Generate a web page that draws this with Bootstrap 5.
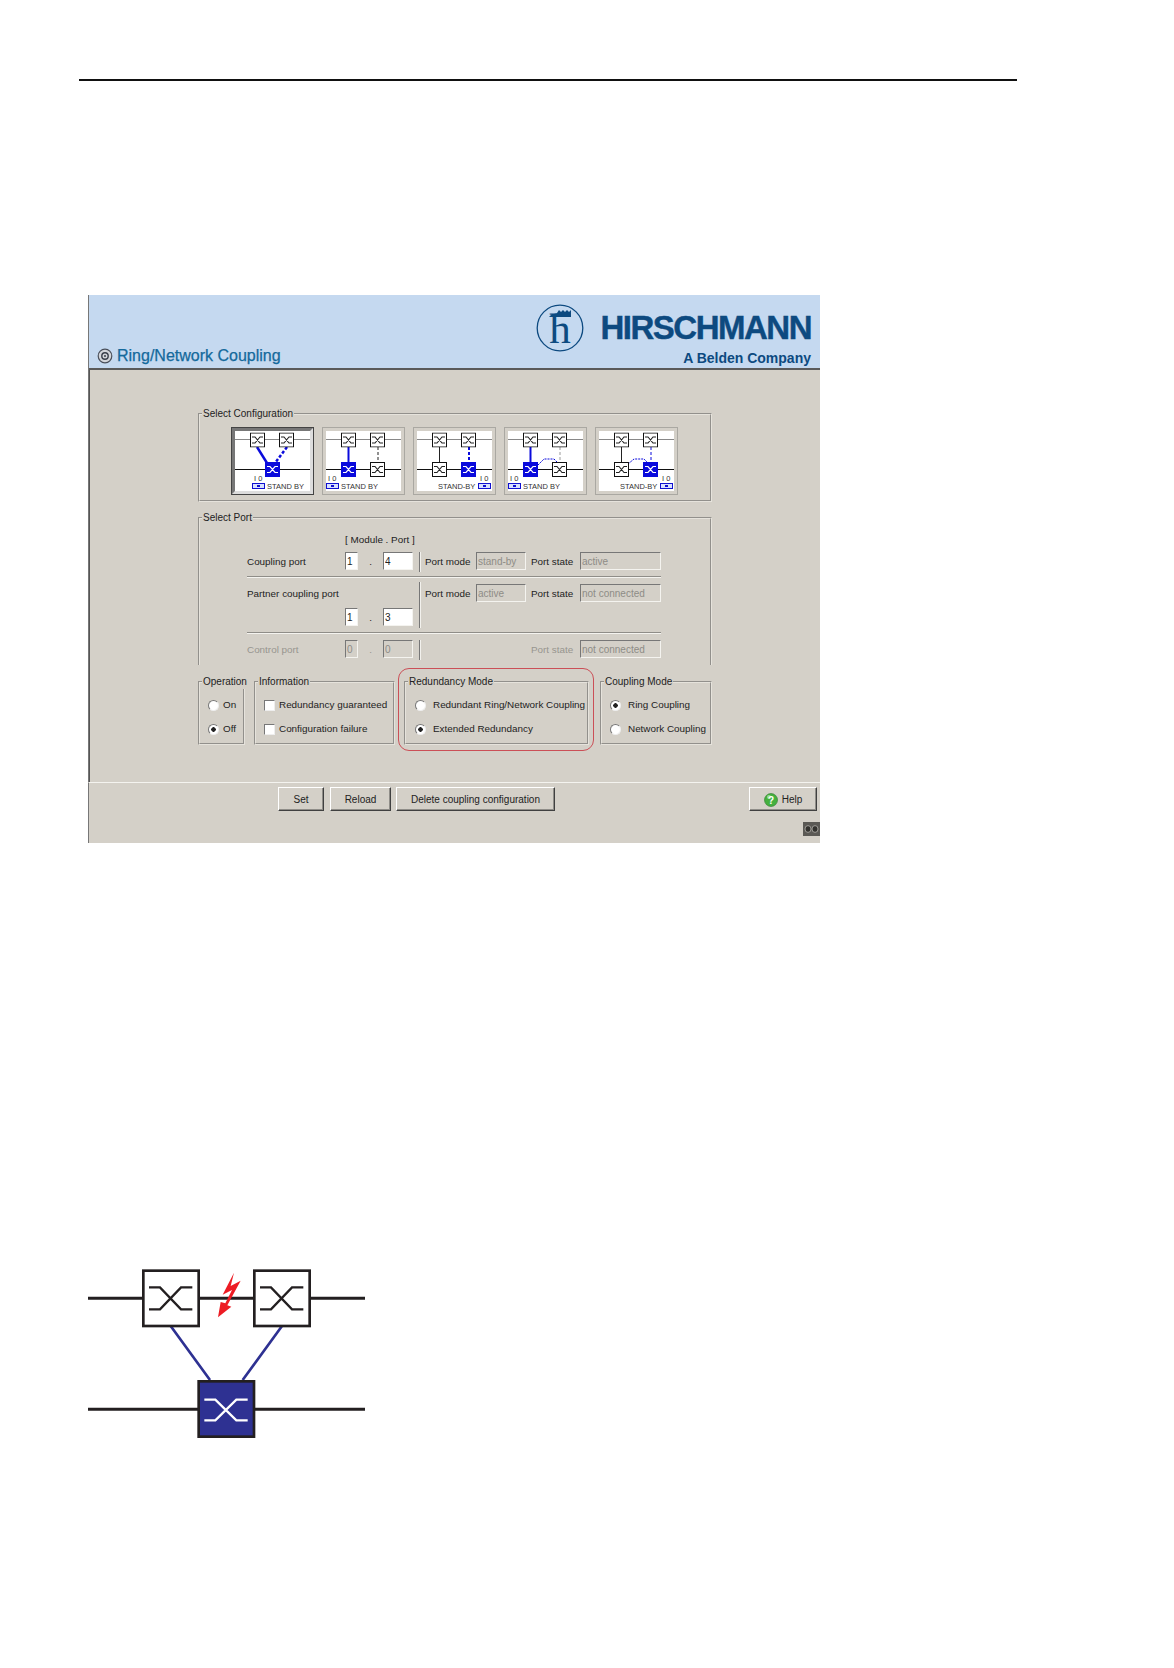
<!DOCTYPE html>
<html lang="en">
<head>
  <meta charset="UTF-8" />
  <title>Ring/Network Coupling</title>
  <link href="https://cdn.jsdelivr.net/npm/bootstrap@5.3.0/dist/css/bootstrap.min.css" rel="stylesheet" />
  <style>
    body { background: #fff; font-family: "Liberation Sans", Arial, sans-serif; }
    .page-wrap { margin-left: 79px; padding-top: 79px; }
    .top-rule { width: 938px; margin: 0 0 214px; border: 0; border-top: 2px solid #111; opacity: 1; }

    .app-panel { margin-left: 9px; width: 732px; height: 548px; background: #d4d0c8; color: #222; font-size: 9.9px; border-left: 1px solid #777; }
    .app-head { height: 75px; background: #c5d9f0; border-bottom: 2px solid #5a5a5a; }
    .app-title { padding: 0 0 2px 8px; font-size: 16px; line-height: 20px; color: #14699c; -webkit-text-stroke: .25px #14699c; }
    .logo-block { padding: 9px 9px 0 0; }
    .logo-name { font-size: 33px; font-weight: 700; letter-spacing: -1.5px; color: #0d4a80; line-height: 46px; margin-left: 17px; -webkit-text-stroke: .4px #0d4a80; }
    .logo-sub { font-size: 14px; font-weight: 700; color: #0d4a80; line-height: 14px; margin-top: -1px; }

    .app-body { height: 412px; padding: 37px 0 0 108px; border-left: 1px solid #555; }
    .app-foot { height: 61px; border-top: 1px solid #f4f3ef; padding: 4px 3px 0 189px; border-left: 1px solid #777; margin-left: -1px; }

    .win-group { border: 2px groove #e6e3dc; margin: 0; padding: 0; min-width: 0; }
    .win-group > legend { float: none; width: auto; font-size: 10px; line-height: 14px; margin: 0 0 0 2px; padding: 0 1px; }
    .cfg-group { width: 514px; height: 95px; }
    .cfg-thumbs { padding: 6px 0 0 31px; gap: 8px; }
    .thumb { width: 83px; height: 68px; padding: 4px; background: #fff; border: 4px solid #d4d0c8; outline: 1px solid #aaa8a2; outline-offset: -1px; box-sizing: border-box; }
    .thumb.picked { border-color: #777 #ddd #ddd #777; outline-color: #444; }
    .thumb svg { display: block; width: 75px; height: 60px; margin: -4px; }
    .thumb text { font-family: "Liberation Sans", Arial, sans-serif; font-size: 7.5px; fill: #333; }

    .port-group { width: 514px; height: 154px; margin-top: 9px; border-bottom: 0; }
    .port-inner { padding: 0 0 0 47px; height: 135px; }
    .cap-line { padding-left: 98px; height: 14px; line-height: 14px; margin-top: 8px; margin-bottom: 5px; }
    .port-left { width: 172px; }
    .port-right { height: 100%; border-left: 1px solid #777; box-shadow: inset 1px 0 0 #f2f1ed; padding-left: 5px; }
    .port-label { width: 98px; }
    .port-text { line-height: 20px; }
    .dot-sep { width: 25px; text-align: center; }
    .port-row { height: 20px; }
    .port-row-tall { height: 46px; }
    .tall-top { padding-top: 2px; }
    .tall-inputs { margin-top: 4px; }
    .port-sep { width: 414px; height: 2px; border-top: 1px solid #8f8d88; border-bottom: 1px solid #f4f3ef; }
    .sep-wide { margin-bottom: 6px !important; }
    .cell-mode { width: 51px; }
    .cell-state { width: 49px; margin-left: 5px; }
    .is-off { color: #97958f; }

    .form-control.win-input { height: 18px; min-height: 0; padding: 0 1px; font-size: 10px; line-height: 16px; border-radius: 0; color: #222; background: #fff; border: 1px solid; border-color: #777 #f4f3ef #f4f3ef #777; box-shadow: none; }
    .form-control.win-input:disabled { background: #d4d0c8; color: #8e8c86; opacity: 1; }
    .w-13 { width: 13px; }
    .w-30 { width: 30px; }
    .w-50 { width: 50px !important; }
    .w-81 { width: 81px; }

    .bottom-row { position: relative; width: 514px; height: 70px; margin-top: 10px; gap: 9px; }
    .win-group.op { width: 47px; }
    .win-group.info { width: 141px; }
    .win-group.redund { width: 185px; }
    .win-group.couple { width: 112px; margin-left: 2px; }
    .opt-line { height: 24px; padding-left: 8px; gap: 4px; white-space: nowrap; }
    .opt-stack { padding-top: 4px; }
    .redund .opt-line { padding-left: 9px; gap: 7px; }
    .couple .opt-line { padding-left: 8px; gap: 7px; }
    .form-check-input.win-radio, .form-check-input.win-check { flex: none; margin: 0; width: 11px; height: 11px; border: 1px solid; border-color: #777 #eee #eee #777; background-color: #fff; background-image: none; box-shadow: none; }
    .form-check-input.win-radio { border-radius: 50%; }
    .form-check-input.win-check { border-radius: 0; }
    .form-check-input.win-radio:checked { background-color: #fff; background-image: radial-gradient(circle, #222 0 2px, #fff 2.5px); }
    .red-frame { position: absolute; left: 200px; top: -7px; width: 196px; height: 83px; border: 1px solid #cb4f57; border-radius: 11px; pointer-events: none; }

    .btn.win-btn { height: 24px; padding: 1px 0 0; font-size: 10px; line-height: 20px; color: #222; background: #d4d0c8; border-radius: 0; border: 1px solid; border-color: #fff #404040 #404040 #fff; box-shadow: inset -1px -1px 0 #8f8d88; }
    .bw-46 { width: 46px; }
    .bw-61 { width: 61px; margin-left: 6px; }
    .bw-159 { width: 159px; margin-left: 5px; }
    .bw-68 { width: 68px; gap: 4px; }
    .corner-mark { margin-top: 11px; margin-right: -3px; display: block; }
    .ring-fig { display: block; margin: 407px 0 0 1px; }
  </style>
</head>
<body>
  <svg class="d-none">
    <symbol id="sw" viewBox="0 0 15 15">
      <rect x=".5" y=".5" width="14" height="14" fill="#fff" stroke="#111" />
      <path d="M2 4.5h3l5 6h3M2 10.5h3l5-6h3" fill="none" stroke="#222" stroke-width="1.1" />
    </symbol>
    <symbol id="sw-on" viewBox="0 0 15 15">
      <rect width="15" height="15" fill="#0a0adc" />
      <path d="M2 4.5h3l5 6h3M2 10.5h3l5-6h3" fill="none" stroke="#fff" stroke-width="1.2" />
    </symbol>
    <symbol id="led" viewBox="0 0 13 6">
      <rect x=".5" y=".5" width="12" height="5" fill="#d8e0ff" stroke="#1010d0" />
      <rect x="5" y="2" width="3" height="2" fill="#1010d0" />
    </symbol>
  </svg>

  <div class="page-wrap">
    <hr class="top-rule" />

    <div class="app-panel">
      <div class="app-head d-flex justify-content-between">
        <div class="app-title align-self-end d-flex align-items-center gap-1">
          <svg width="16" height="16" viewBox="0 0 16 16"><circle cx="8" cy="8" r="6.8" fill="#d3d5da" stroke="#4a4f5a" stroke-width="1.2" /><circle cx="8" cy="8" r="3.2" fill="none" stroke="#3a3f4a" stroke-width="1.4" /><circle cx="8" cy="8" r="1" fill="#3a3f4a" /></svg>
          <span>Ring/Network Coupling</span>
        </div>
        <div class="logo-block text-end">
          <div class="d-flex align-items-center">
            <svg width="48" height="48" viewBox="0 0 48 48">
              <circle cx="24" cy="24" r="22.8" fill="none" stroke="#0d4a80" stroke-width="1.3" />
              <path d="M13 13h22V6l-2 2-2-2-2 2-2-2-2 2-2-2-2 3-6 2z" fill="#0d4a80" />
              <text x="24" y="39" text-anchor="middle" font-family="Liberation Serif" font-size="43" fill="#0d4a80">h</text>
            </svg>
            <div class="logo-name">HIRSCHMANN</div>
          </div>
          <div class="logo-sub">A Belden Company</div>
        </div>
      </div>

      <div class="app-body">
        <fieldset class="win-group cfg-group">
          <legend>Select Configuration</legend>
          <div class="cfg-thumbs d-flex">
            <div class="thumb picked">
              <svg viewBox="0 0 75 60">
                <path d="M0 8.5h75" stroke="#888" /><path d="M0 38.5h75" stroke="#111" />
                <path d="M22 16l10 16" stroke="#0a0adc" stroke-width="2.5" /><path d="M52 16L40 32" stroke="#0a0adc" stroke-width="2.5" stroke-dasharray="3 2" />
                <use href="#sw" x="15" y="1.5" width="15" height="15" /><use href="#sw" x="44" y="1.5" width="15" height="15" /><use href="#sw-on" x="30" y="31" width="15" height="15" />
                <text x="19" y="50">I 0</text><use href="#led" x="17" y="52" width="13" height="6" /><text x="32" y="57.5">STAND BY</text>
              </svg>
            </div>
            <div class="thumb">
              <svg viewBox="0 0 75 60">
                <path d="M0 8.5h75" stroke="#888" /><path d="M0 38.5h75" stroke="#111" />
                <path d="M22.5 16v16" stroke="#0a0adc" stroke-width="2" /><path d="M52 16v16" stroke="#222" stroke-dasharray="3 2" />
                <use href="#sw" x="15" y="1.5" width="15" height="15" /><use href="#sw" x="44" y="1.5" width="15" height="15" /><use href="#sw-on" x="15" y="31" width="15" height="15" /><use href="#sw" x="44" y="31" width="15" height="15" />
                <text x="2" y="50">I 0</text><use href="#led" x="0" y="52" width="13" height="6" /><text x="15" y="57.5">STAND BY</text>
              </svg>
            </div>
            <div class="thumb">
              <svg viewBox="0 0 75 60">
                <path d="M0 8.5h75" stroke="#888" /><path d="M0 38.5h75" stroke="#111" />
                <path d="M22.5 16v16" stroke="#222" /><path d="M52 16v16" stroke="#0a0adc" stroke-width="2" stroke-dasharray="3 2" />
                <use href="#sw" x="15" y="1.5" width="15" height="15" /><use href="#sw" x="44" y="1.5" width="15" height="15" /><use href="#sw" x="15" y="31" width="15" height="15" /><use href="#sw-on" x="44" y="31" width="15" height="15" />
                <text x="63" y="50">I 0</text><use href="#led" x="61" y="52" width="13" height="6" /><text x="21" y="57.5">STAND-BY</text>
              </svg>
            </div>
            <div class="thumb">
              <svg viewBox="0 0 75 60">
                <path d="M0 8.5h75" stroke="#888" /><path d="M0 38.5h75" stroke="#111" />
                <path d="M22.5 16v16" stroke="#0a0adc" stroke-width="2" /><path d="M52 16v16" stroke="#999" stroke-dasharray="3 2" />
                <path d="M30 34l6-6h10l4 4" fill="none" stroke="#0a0adc" stroke-dasharray="2 1" />
                <use href="#sw" x="15" y="1.5" width="15" height="15" /><use href="#sw" x="44" y="1.5" width="15" height="15" /><use href="#sw-on" x="15" y="31" width="15" height="15" /><use href="#sw" x="44" y="31" width="15" height="15" />
                <text x="2" y="50">I 0</text><use href="#led" x="0" y="52" width="13" height="6" /><text x="15" y="57.5">STAND BY</text>
              </svg>
            </div>
            <div class="thumb">
              <svg viewBox="0 0 75 60">
                <path d="M0 8.5h75" stroke="#888" /><path d="M0 38.5h75" stroke="#111" />
                <path d="M22.5 16v16" stroke="#222" /><path d="M52 16v16" stroke="#0a0adc" stroke-dasharray="3 2" />
                <path d="M29 33l6-5h10l4 4" fill="none" stroke="#0a0adc" stroke-dasharray="2 1" />
                <use href="#sw" x="15" y="1.5" width="15" height="15" /><use href="#sw" x="44" y="1.5" width="15" height="15" /><use href="#sw" x="15" y="31" width="15" height="15" /><use href="#sw-on" x="44" y="31" width="15" height="15" />
                <text x="63" y="50">I 0</text><use href="#led" x="61" y="52" width="13" height="6" /><text x="21" y="57.5">STAND-BY</text>
              </svg>
            </div>
          </div>
        </fieldset>

        <fieldset class="win-group port-group">
          <legend>Select Port</legend>
          <div class="port-inner">
            <div class="cap-line">[ Module . Port ]</div>

            <div class="d-flex port-row">
              <div class="port-left d-flex align-items-start">
                <span class="port-label port-text">Coupling port</span>
                <input class="form-control win-input w-13" value="1" readonly />
                <span class="dot-sep port-text">.</span>
                <input class="form-control win-input w-30" value="4" readonly />
              </div>
              <div class="port-right d-flex align-items-start">
                <span class="cell-mode port-text">Port mode</span>
                <input class="form-control win-input w-50" value="stand-by" disabled />
                <span class="cell-state port-text">Port state</span>
                <input class="form-control win-input w-81" value="active" disabled />
              </div>
            </div>
            <div class="port-sep my-1"></div>

            <div class="d-flex port-row-tall">
              <div class="port-left tall-top">
                <div class="port-text">Partner coupling port</div>
                <div class="d-flex tall-inputs">
                  <span class="port-label"></span>
                  <input class="form-control win-input w-13" value="1" readonly />
                  <span class="dot-sep port-text">.</span>
                  <input class="form-control win-input w-30" value="3" readonly />
                </div>
              </div>
              <div class="port-right d-flex align-items-start tall-top">
                <span class="cell-mode port-text">Port mode</span>
                <input class="form-control win-input w-50" value="active" disabled />
                <span class="cell-state port-text">Port state</span>
                <input class="form-control win-input w-81" value="not connected" disabled />
              </div>
            </div>
            <div class="port-sep my-1 sep-wide"></div>

            <div class="d-flex port-row is-off">
              <div class="port-left d-flex align-items-start">
                <span class="port-label port-text">Control port</span>
                <input class="form-control win-input w-13" value="0" disabled />
                <span class="dot-sep port-text">.</span>
                <input class="form-control win-input w-30" value="0" disabled />
              </div>
              <div class="port-right d-flex align-items-start">
                <span class="cell-mode"></span>
                <span class="w-50"></span>
                <span class="cell-state port-text">Port state</span>
                <input class="form-control win-input w-81" value="not connected" disabled />
              </div>
            </div>
          </div>
        </fieldset>

        <div class="bottom-row d-flex">
          <fieldset class="win-group op">
            <legend>Operation</legend>
            <div class="opt-stack">
              <div class="opt-line d-flex align-items-center"><input class="form-check-input win-radio" type="radio" name="op" /><span>On</span></div>
              <div class="opt-line d-flex align-items-center"><input class="form-check-input win-radio" type="radio" name="op" checked /><span>Off</span></div>
            </div>
          </fieldset>
          <fieldset class="win-group info">
            <legend>Information</legend>
            <div class="opt-stack">
              <div class="opt-line d-flex align-items-center"><input class="form-check-input win-check" type="checkbox" /><span>Redundancy guaranteed</span></div>
              <div class="opt-line d-flex align-items-center"><input class="form-check-input win-check" type="checkbox" /><span>Configuration failure</span></div>
            </div>
          </fieldset>
          <fieldset class="win-group redund">
            <legend>Redundancy Mode</legend>
            <div class="opt-stack">
              <div class="opt-line d-flex align-items-center"><input class="form-check-input win-radio" type="radio" name="rm" /><span>Redundant Ring/Network Coupling</span></div>
              <div class="opt-line d-flex align-items-center"><input class="form-check-input win-radio" type="radio" name="rm" checked /><span>Extended Redundancy</span></div>
            </div>
          </fieldset>
          <fieldset class="win-group couple">
            <legend>Coupling Mode</legend>
            <div class="opt-stack">
              <div class="opt-line d-flex align-items-center"><input class="form-check-input win-radio" type="radio" name="cm" checked /><span>Ring Coupling</span></div>
              <div class="opt-line d-flex align-items-center"><input class="form-check-input win-radio" type="radio" name="cm" /><span>Network Coupling</span></div>
            </div>
          </fieldset>
          <div class="red-frame"></div>
        </div>
      </div>

      <div class="app-foot">
        <div class="d-flex">
          <button class="btn win-btn bw-46" type="button">Set</button>
          <button class="btn win-btn bw-61" type="button">Reload</button>
          <button class="btn win-btn bw-159" type="button">Delete coupling configuration</button>
          <button class="btn win-btn bw-68 ms-auto d-flex align-items-center justify-content-center" type="button">
            <svg width="14" height="14" viewBox="0 0 14 14"><circle cx="7" cy="7" r="6.5" fill="#45b03f" stroke="#2a7a2a" stroke-width=".6" /><circle cx="5" cy="4" r="2" fill="#9bdc8f" /><text x="7" y="10.5" text-anchor="middle" font-size="10" font-weight="700" fill="#fff" font-family="Liberation Sans">?</text></svg>
            <span>Help</span>
          </button>
        </div>
        <svg class="corner-mark ms-auto" width="17" height="14" viewBox="0 0 17 14"><rect width="17" height="14" fill="#5b5955" /><ellipse cx="5" cy="7" rx="3" ry="3.4" fill="#33322f" stroke="#c4c2bc" stroke-width=".7" /><ellipse cx="12" cy="7" rx="3" ry="3.4" fill="#33322f" stroke="#c4c2bc" stroke-width=".7" /></svg>
      </div>
    </div>

    <svg class="ring-fig" width="300" height="200" viewBox="0 0 900 600">
      <path d="M24 145H855M24 478H855" stroke="#231f20" stroke-width="9" fill="none" />
      <path d="M272 228L390 390M606 228L488 390" stroke="#2e3192" stroke-width="8" fill="none" />
      <rect x="190" y="62" width="166" height="166" fill="#fff" stroke="#231f20" stroke-width="8" />
      <rect x="523" y="62" width="166" height="166" fill="#fff" stroke="#231f20" stroke-width="8" />
      <rect x="356" y="394" width="166" height="166" fill="#2e3192" stroke="#231f20" stroke-width="8" />
      <path d="M207 112H240L303 178H337M207 178H240L303 112H337" fill="none" stroke="#231f20" stroke-width="7" />
      <path d="M540 112H573L636 178H670M540 178H573L636 112H670" fill="none" stroke="#231f20" stroke-width="7" />
      <path d="M373 449H406L469 511H503M373 511H406L469 449H503" fill="none" stroke="#fff" stroke-width="7" />
      <path d="M462 68L428 134L456 120L436 160L422 156L414 202L454 170L442 166L482 92L452 108Z" fill="#ed1c24" />
    </svg>
  </div>
</body>
</html>
